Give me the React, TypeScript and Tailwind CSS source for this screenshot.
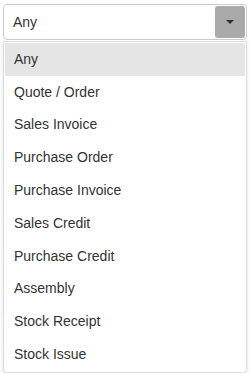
const options = [
  "Any",
  "Quote / Order",
  "Sales Invoice",
  "Purchase Order",
  "Purchase Invoice",
  "Sales Credit",
  "Purchase Credit",
  "Assembly",
  "Stock Receipt",
  "Stock Issue",
];

export default function App() {
  const selected = "Any";

  return (
    <div
      className="w-[250px] h-[373px] bg-white px-[3px] pt-[4px] text-[14px] text-[#333]"
      style={{ fontFamily: '"Liberation Sans", Arial, sans-serif' }}
    >
      <div className="flex h-[36px] items-center justify-between rounded-[4px] border border-[#ccc] bg-white pl-[9px] pr-[1px]">
        <span>{selected}</span>
        <div className="flex h-[32px] w-[30px] items-center justify-center rounded-[3px] bg-[#aaa]">
          <div className="h-0 w-0 border-x-[4px] border-t-[4px] border-x-transparent border-t-[#333]" />
        </div>
      </div>

      <ul className="mt-[1px] rounded-b-[4px] border border-[#ddd] bg-white p-[1px] shadow-[0_2px_4px_rgba(0,0,0,0.12)]">
        {options.map((opt) => (
          <li
            key={opt}
            className={
              "flex h-[32.8px] items-center pl-[9px] " +
              (opt === selected ? "bg-[#e5e5e5]" : "")
            }
          >
            {opt}
          </li>
        ))}
      </ul>
    </div>
  );
}
